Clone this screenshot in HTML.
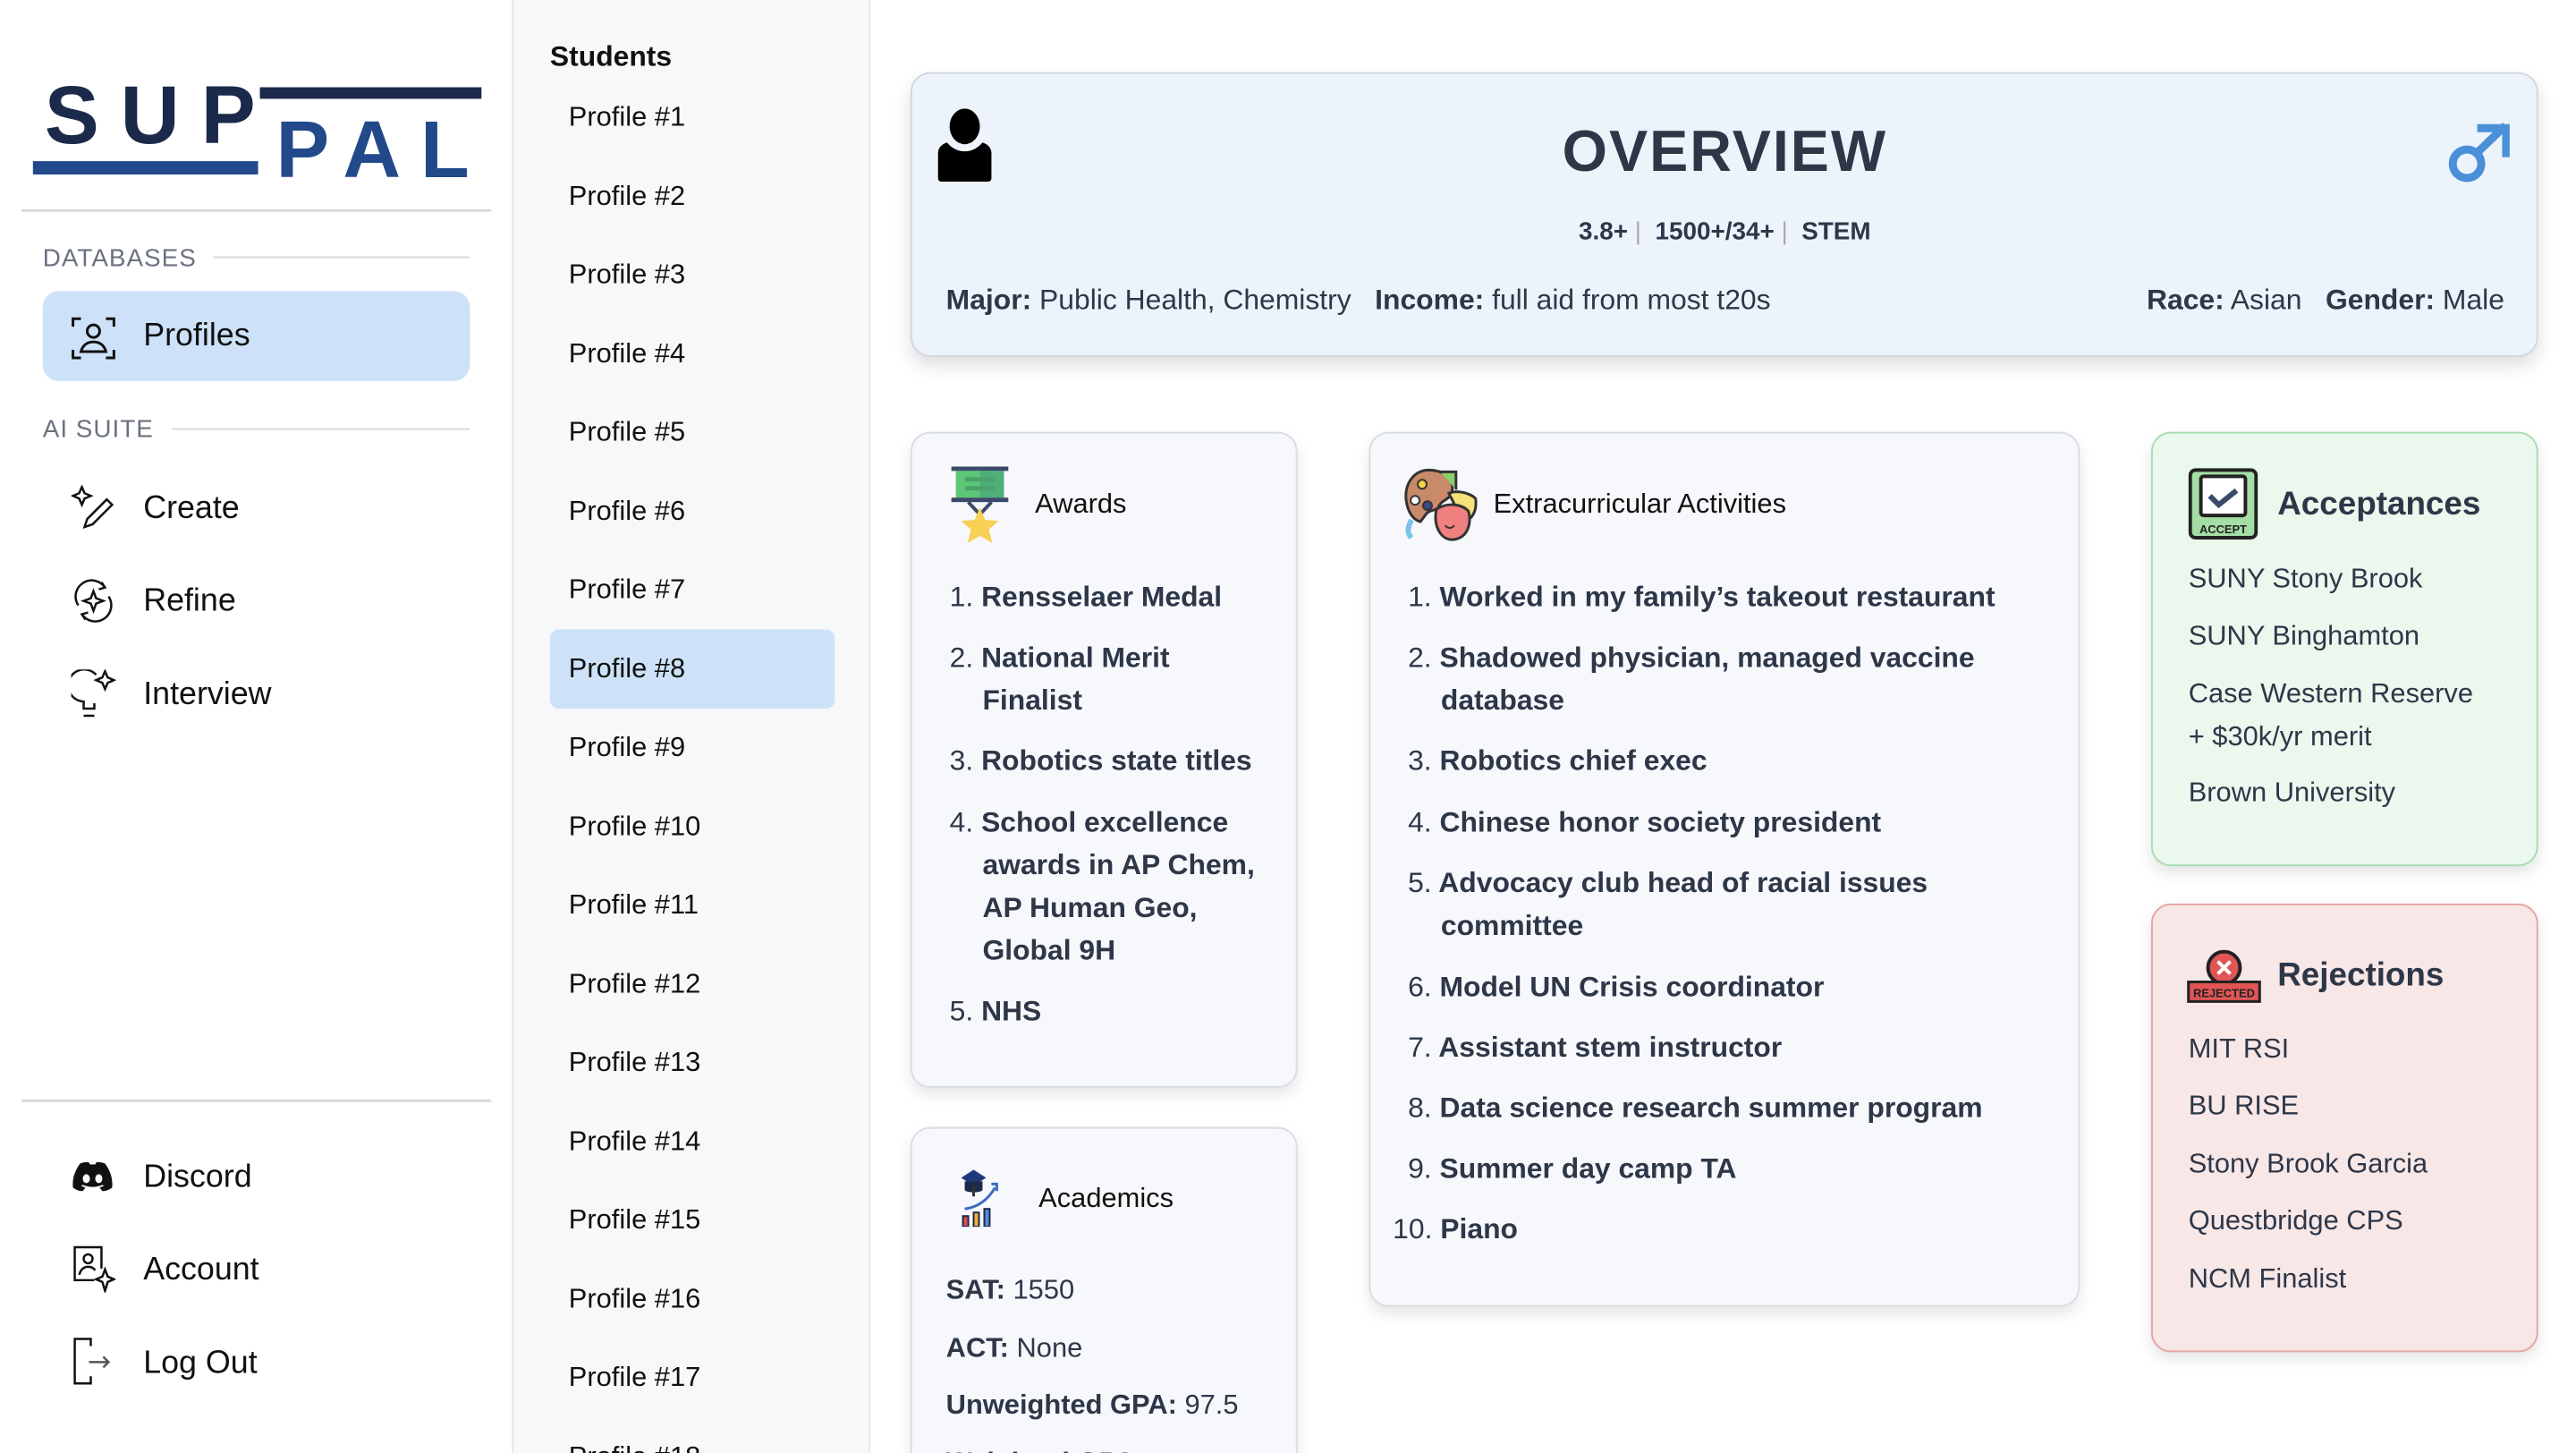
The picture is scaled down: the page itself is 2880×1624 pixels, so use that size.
<!DOCTYPE html>
<html style="width:2880px;height:1624px;overflow:hidden"><head><meta charset="utf-8">
<style>
*{margin:0;padding:0;box-sizing:border-box}
body{width:2880px;height:1624px;overflow:hidden;background:#fff;font-family:"Liberation Sans",Arial,sans-serif;position:relative;color:#111}
#w{position:absolute;left:0;top:0;width:2900px;height:1640px;transform:scale(0.995);transform-origin:0 0}
.a{position:absolute;white-space:nowrap}
#side{position:absolute;left:0;top:0;width:577px;height:1640px;background:#fff;border-right:2px solid #e5e7eb}
#mid{position:absolute;left:577px;top:0;width:401px;height:1640px;background:#f7f8fa;border-right:2px solid #e5e7eb}
.lbl{font-size:28px;color:#6b7280;letter-spacing:1px}
.nav{font-size:36px;color:#111}
.pr{font-size:31px;color:#111;left:639px}
.card{position:absolute;border-radius:22px;border:2px solid #d9dde4;background:#f7f8fc;box-shadow:0 8px 16px rgba(0,0,0,.10)}
.li{font-size:32px;font-weight:bold;color:#2d3748;line-height:48px}
.num{font-weight:normal}
.col{font-size:31px;color:#2d3748}
</style></head><body><div id="w">
<div id="side"></div>
<div id="mid"></div>

<!-- logo -->
<div class="a" style="left:50px;top:84px;font-size:92px;font-weight:bold;color:#1b2a4a;letter-spacing:24px;line-height:92px">SUP</div>
<div style="position:absolute;left:292px;top:98px;width:249px;height:13px;background:#1b2a4a"></div>
<div class="a" style="left:310px;top:124px;font-size:90px;font-weight:bold;color:#224a8a;letter-spacing:22px;line-height:90px">PAL</div>
<div style="position:absolute;left:37px;top:181px;width:253px;height:15px;background:#224a8a"></div>
<div style="position:absolute;left:24px;top:235px;width:528px;height:3px;background:#d6d9de"></div>

<div class="a lbl" style="left:48px;top:274px">DATABASES</div>
<div style="position:absolute;left:240px;top:288px;width:288px;height:2px;background:#d6d9de"></div>
<div style="position:absolute;left:48px;top:327px;width:480px;height:101px;border-radius:18px;background:#cde2f8"></div>
<svg class="a" style="left:80px;top:355px" width="50" height="50" viewBox="0 0 50 50" fill="none" stroke="#111" stroke-width="3"><path d="M2 12V3h9M39 3h9v9M2 38v9h9M48 38v9h-9"/><circle cx="25" cy="17" r="7"/><path d="M11 40c2-8 8-11 14-11s12 3 14 11z"/></svg>
<div class="a nav" style="left:161px;top:355px">Profiles</div>

<div class="a lbl" style="left:48px;top:466px">AI SUITE</div>
<div style="position:absolute;left:193px;top:481px;width:335px;height:2px;background:#d6d9de"></div>

<svg class="a" style="left:80px;top:545px" width="50" height="50" viewBox="0 0 50 50" fill="none" stroke="#111" stroke-width="2.5"><path d="M12 2l3 7 7 3-7 3-3 7-3-7-7-3 7-3z"/><path d="M40 16l6 6-22 22-9 3 3-9z"/></svg>
<div class="a nav" style="left:161px;top:549px">Create</div>
<svg class="a" style="left:80px;top:650px" width="50" height="50" viewBox="0 0 50 50" fill="none" stroke="#111" stroke-width="2.5"><path d="M8 30a18 18 0 0 1 30-20M42 20a18 18 0 0 1-30 20"/><path d="M34 4l4 6-7 2M16 46l-4-6 7-2"/><path d="M25 14l3 8 8 3-8 3-3 8-3-8-8-3 8-3z"/></svg>
<div class="a nav" style="left:161px;top:653px">Refine</div>
<svg class="a" style="left:80px;top:752px" width="50" height="56" viewBox="0 0 50 56" fill="none" stroke="#111" stroke-width="2.5"><path d="M28 6a18 18 0 1 0-14 30v8h12v-6"/><path d="M14 52h12"/><path d="M38 2l3 7 7 3-7 3-3 7-3-7-7-3 7-3z"/></svg>
<div class="a nav" style="left:161px;top:758px">Interview</div>

<div style="position:absolute;left:24px;top:1235px;width:528px;height:3px;background:#d6d9de"></div>
<svg class="a" style="left:80px;top:1305px" width="48" height="34" viewBox="0 0 48 34"><path fill="#111" d="M10 2c5-2 9-2 10-1l1 2h6l1-2c1-1 5-1 10 1 6 8 9 17 8 27-4 3-8 4-11 4l-3-4 5-2-2-1c-7 3-15 3-22 0l-2 1 5 2-3 4c-3 0-7-1-11-4-1-10 2-19 8-27z"/><ellipse cx="17" cy="19" rx="4" ry="5" fill="#fff"/><ellipse cx="31" cy="19" rx="4" ry="5" fill="#fff"/></svg>
<div class="a nav" style="left:161px;top:1300px">Discord</div>
<svg class="a" style="left:80px;top:1398px" width="50" height="54" viewBox="0 0 50 54" fill="none" stroke="#111" stroke-width="2.5"><path d="M26 40H4V3h30v24"/><circle cx="19" cy="16" r="5"/><path d="M9 34c2-7 6-9 10-9 3 0 6 1 8 4"/><path d="M38 28l3 8 7 3-7 3-3 10-3-10-7-3 7-3z"/></svg>
<div class="a nav" style="left:161px;top:1404px">Account</div>
<svg class="a" style="left:80px;top:1502px" width="50" height="54" viewBox="0 0 50 54" fill="none" stroke="#111" stroke-width="2.5"><path d="M22 10V2H4v50h18v-8"/><path d="M20 28h22M36 22l6 6-6 6" stroke="#555"/></svg>
<div class="a nav" style="left:161px;top:1509px">Log Out</div>

<!-- middle -->
<div class="a" style="left:618px;top:45px;font-size:32px;font-weight:bold">Students</div>
<div style="position:absolute;left:618px;top:707px;width:320px;height:89px;border-radius:10px;background:#cde2f8"></div>
<div class="a pr" style="top:113px">Profile #1</div>
<div class="a pr" style="top:202px">Profile #2</div>
<div class="a pr" style="top:290px">Profile #3</div>
<div class="a pr" style="top:379px">Profile #4</div>
<div class="a pr" style="top:467px">Profile #5</div>
<div class="a pr" style="top:556px">Profile #6</div>
<div class="a pr" style="top:644px">Profile #7</div>
<div class="a pr" style="top:733px">Profile #8</div>
<div class="a pr" style="top:821px">Profile #9</div>
<div class="a pr" style="top:910px">Profile #10</div>
<div class="a pr" style="top:998px">Profile #11</div>
<div class="a pr" style="top:1087px">Profile #12</div>
<div class="a pr" style="top:1175px">Profile #13</div>
<div class="a pr" style="top:1264px">Profile #14</div>
<div class="a pr" style="top:1352px">Profile #15</div>
<div class="a pr" style="top:1441px">Profile #16</div>
<div class="a pr" style="top:1529px">Profile #17</div>
<div class="a pr" style="top:1618px">Profile #18</div>

<!-- overview -->
<div class="card" style="left:1023px;top:81px;width:1829px;height:320px;background:#edf3fb;border-color:#d3d8df;box-shadow:0 10px 20px rgba(0,0,0,.13)"></div>
<svg class="a" style="left:1050px;top:122px" width="68" height="82" viewBox="0 0 68 82"><ellipse cx="34" cy="20" rx="17" ry="20" fill="#000"/><path d="M4 50c0-6 4-10 10-12 5 6 12 10 20 10s15-4 20-10c6 2 10 6 10 12v28c0 3-2 4-4 4H8c-2 0-4-1-4-4z" fill="#000"/></svg>
<div class="a" style="left:1938px;top:132px;transform:translateX(-50%);font-size:65px;font-weight:bold;color:#2d3748;letter-spacing:2px">OVERVIEW</div>
<div class="a" style="left:1938px;top:244px;transform:translateX(-50%);font-size:28px;font-weight:bold;color:#2d3748">3.8+ <span style="color:#aaa;font-weight:normal">|</span>&nbsp;&nbsp;1500+/34+ <span style="color:#aaa;font-weight:normal">|</span>&nbsp;&nbsp;STEM</div>
<svg class="a" style="left:2748px;top:138px" width="72" height="70" viewBox="0 0 72 70" fill="none" stroke="#4a90d9" stroke-width="9"><circle cx="24" cy="46" r="16"/><path d="M36 33L64 6M40 6h28v28" stroke-linecap="square"/></svg>
<div class="a" style="left:1063px;top:318px;font-size:32px;color:#2d3748"><b>Major:</b> Public Health, Chemistry &nbsp;&nbsp;<b>Income:</b> full aid from most t20s</div>
<div class="a" style="right:86px;top:318px;font-size:32px;color:#2d3748"><b>Race:</b> Asian &nbsp;&nbsp;<b>Gender:</b> Male</div>

<!-- awards -->
<div class="card" style="left:1023px;top:485px;width:435px;height:737px"></div>
<svg class="a" style="left:1066px;top:524px" width="72" height="86" viewBox="0 0 72 86"><rect x="3" y="0" width="64" height="5" fill="#3b4a6b"/><rect x="8" y="5" width="54" height="30" fill="#5cc876"/><rect x="35" y="5" width="27" height="30" fill="#4eaf78"/><rect x="18" y="12" width="34" height="5" rx="2" fill="#4aa26a"/><rect x="18" y="22" width="34" height="5" rx="2" fill="#4aa26a"/><rect x="3" y="35" width="64" height="5" fill="#3b4a6b"/><path d="M22 40l13 14 13-14" stroke="#3b4a6b" stroke-width="4" fill="none"/><path d="M35 46l6 14 15 1-11 10 4 15-14-8-14 8 4-15-11-10 15-1z" fill="#f7d055"/></svg>
<div class="a" style="left:1163px;top:548px;font-size:31px">Awards</div>
<div class="a li" style="left:1067px;top:646px"><span class="num">1.</span> Rensselaer Medal</div>
<div class="a li" style="left:1067px;top:714px"><span class="num">2.</span> National Merit<br><span style="padding-left:37px">Finalist</span></div>
<div class="a li" style="left:1067px;top:830px"><span class="num">3.</span> Robotics state titles</div>
<div class="a li" style="left:1067px;top:899px"><span class="num">4.</span> School excellence<br><span style="padding-left:37px">awards in AP Chem,</span><br><span style="padding-left:37px">AP Human Geo,</span><br><span style="padding-left:37px">Global 9H</span></div>
<div class="a li" style="left:1067px;top:1111px"><span class="num">5.</span> NHS</div>

<!-- academics -->
<div class="card" style="left:1023px;top:1266px;width:435px;height:420px"></div>
<svg class="a" style="left:1076px;top:1314px" width="56" height="64" viewBox="0 0 56 64"><path d="M18 0l14 9-14 9-14-9z" fill="#1e3a7a"/><path d="M8 13h20v10c-3 3-17 3-20 0z" fill="#1b2a4a"/><path d="M18 18v12" stroke="#333" stroke-width="3"/><path d="M8 44c14-2 26-10 34-24" stroke="#3b6cc0" stroke-width="3" fill="none"/><path d="M38 16l6 0 0 8" stroke="#3b6cc0" stroke-width="3" fill="none"/><rect x="6" y="52" width="6" height="12" fill="#e04a4a" stroke="#1b2a4a" stroke-width="2"/><rect x="18" y="48" width="6" height="16" fill="#f2b233" stroke="#1b2a4a" stroke-width="2"/><rect x="30" y="44" width="6" height="20" fill="#5b8be0" stroke="#1b2a4a" stroke-width="2"/></svg>
<div class="a" style="left:1167px;top:1328px;font-size:31px">Academics</div>
<div class="a col" style="left:1063px;top:1431px"><b>SAT:</b> 1550</div>
<div class="a col" style="left:1063px;top:1496px"><b>ACT:</b> None</div>
<div class="a col" style="left:1063px;top:1560px"><b>Unweighted GPA:</b> 97.5</div>
<div class="a col" style="left:1063px;top:1625px"><b>Weighted GPA:</b></div>

<!-- ECs -->
<div class="card" style="left:1538px;top:485px;width:799px;height:983px"></div>
<svg class="a" style="left:1576px;top:524px" width="84" height="86" viewBox="0 0 84 86"><path d="M30 4C12 4 2 20 4 38c2 14 8 22 16 24l6-8c4-6 12-4 14-8 4-10 16-8 16-22C56 12 44 4 30 4z" fill="#c98a6a" stroke="#333" stroke-width="3"/><circle cx="22" cy="20" r="5" fill="#f5d24a" stroke="#333" stroke-width="2"/><circle cx="14" cy="38" r="5" fill="#fff" stroke="#333" stroke-width="2"/><circle cx="28" cy="44" r="5" fill="#3b4a8a" stroke="#333" stroke-width="2"/><path d="M42 6h18v20" stroke="#333" stroke-width="3" fill="#8ccf6a"/><path d="M10 60c-4 8-6 14 0 20" stroke="#7cc3e8" stroke-width="6" fill="none"/><path d="M52 30c10-4 24 0 30 6 2 14-4 24-14 26z" fill="#f7e27a" stroke="#333" stroke-width="3"/><path d="M38 48c12-8 28-6 36 2 4 16-2 30-16 32-14 2-24-14-20-34z" fill="#f08080" stroke="#333" stroke-width="3"/><path d="M48 66c2 4 8 4 10 0" stroke="#333" stroke-width="2" fill="none"/></svg>
<div class="a" style="left:1678px;top:548px;font-size:31px">Extracurricular Activities</div>
<div class="a li" style="left:1582px;top:646px"><span class="num">1.</span> Worked in my family’s takeout restaurant</div>
<div class="a li" style="left:1582px;top:714px"><span class="num">2.</span> Shadowed physician, managed vaccine<br><span style="padding-left:37px">database</span></div>
<div class="a li" style="left:1582px;top:830px"><span class="num">3.</span> Robotics chief exec</div>
<div class="a li" style="left:1582px;top:899px"><span class="num">4.</span> Chinese honor society president</div>
<div class="a li" style="left:1582px;top:967px"><span class="num">5.</span> Advocacy club head of racial issues<br><span style="padding-left:37px">committee</span></div>
<div class="a li" style="left:1582px;top:1084px"><span class="num">6.</span> Model UN Crisis coordinator</div>
<div class="a li" style="left:1582px;top:1152px"><span class="num">7.</span> Assistant stem instructor</div>
<div class="a li" style="left:1582px;top:1220px"><span class="num">8.</span> Data science research summer program</div>
<div class="a li" style="left:1582px;top:1288px"><span class="num">9.</span> Summer day camp TA</div>
<div class="a li" style="left:1565px;top:1356px"><span class="num">10.</span> Piano</div>

<!-- acceptances -->
<div class="card" style="left:2417px;top:485px;width:435px;height:488px;background:#ebf8ee;border-color:#a9dcb2"></div>
<svg class="a" style="left:2459px;top:525px" width="78" height="82" viewBox="0 0 78 82"><rect x="2" y="3" width="74" height="76" rx="6" fill="#a5dea5" stroke="#222" stroke-width="4"/><rect x="14" y="10" width="50" height="44" rx="3" fill="#fff" stroke="#222" stroke-width="4"/><path d="M24 32l10 10 20-16" stroke="#3b4a6b" stroke-width="6" fill="none"/><text x="39" y="74" font-size="13" font-weight="bold" text-anchor="middle" fill="#222" font-family="Liberation Sans">ACCEPT</text></svg>
<div class="a" style="left:2559px;top:545px;font-size:37px;font-weight:bold;color:#2d3748">Acceptances</div>
<div class="a col" style="left:2459px;top:632px">SUNY Stony Brook</div>
<div class="a col" style="left:2459px;top:696px">SUNY Binghamton</div>
<div class="a col" style="left:2459px;top:755px;line-height:48px">Case Western Reserve<br>+ $30k/yr merit</div>
<div class="a col" style="left:2459px;top:872px">Brown University</div>

<!-- rejections -->
<div class="card" style="left:2417px;top:1015px;width:435px;height:504px;background:#f8e7e7;border-color:#e8a5a5"></div>
<svg class="a" style="left:2457px;top:1067px" width="84" height="60" viewBox="0 0 84 60"><circle cx="42" cy="20" r="18" fill="#e05555" stroke="#222" stroke-width="4"/><path d="M35 13l14 14M49 13l-14 14" stroke="#fff" stroke-width="4"/><rect x="2" y="36" width="80" height="22" fill="#e05555" stroke="#222" stroke-width="3"/><text x="42" y="53" font-size="13" font-weight="bold" text-anchor="middle" fill="#222" font-family="Liberation Sans">REJECTED</text></svg>
<div class="a" style="left:2559px;top:1074px;font-size:37px;font-weight:bold;color:#2d3748">Rejections</div>
<div class="a col" style="left:2459px;top:1160px">MIT RSI</div>
<div class="a col" style="left:2459px;top:1224px">BU RISE</div>
<div class="a col" style="left:2459px;top:1289px">Stony Brook Garcia</div>
<div class="a col" style="left:2459px;top:1353px">Questbridge CPS</div>
<div class="a col" style="left:2459px;top:1418px">NCM Finalist</div>
</div></body></html>
